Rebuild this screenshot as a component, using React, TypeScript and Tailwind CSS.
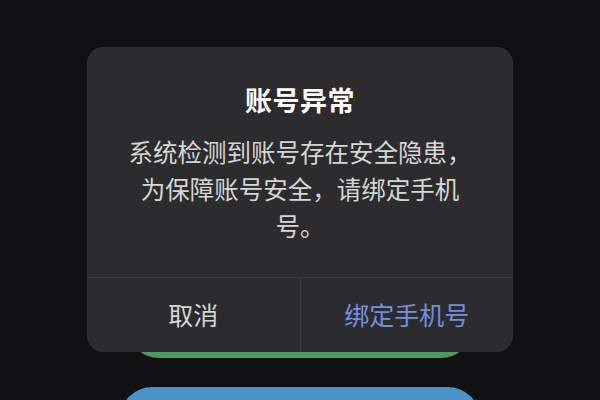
export default function App() {
  return (
    <div
      className="relative w-[600px] h-[400px] overflow-hidden bg-[#111113]"
      style={{ fontFamily: '"Noto Sans CJK SC", "Noto Sans", sans-serif' }}
    >
      {/* page behind the alert */}
      <div className="flex flex-col items-center pt-[296px] gap-[29px]">
        <div className="w-[344px] h-[62px] rounded-[31px] bg-[#4c9a5c]" />
        <div className="w-[360px] h-[64px] rounded-[32px] bg-[#4a93c8]" />
      </div>

      {/* alert */}
      <div className="absolute left-[87px] top-[47px] w-[426px] rounded-[16px] bg-[#2c2c2e] flex flex-col">
        <div className="flex flex-col items-center pt-[37px] pb-[33px]">
          <h2 className="text-[27px] leading-[32px] font-bold text-white tracking-[0.5px]">账号异常</h2>
          <p className="mt-[17px] text-[24.5px] leading-[37px] text-[#d6d6d6] text-center">
            系统检测到账号存在安全隐患，
            <br />
            为保障账号安全，请绑定手机
            <br />
            号。
          </p>
        </div>
        <div className="flex h-[75px] border-t border-[#3a3a3c]">
          <button className="flex-1 flex items-center justify-center text-[25px] text-[#d6d6d6]">
            取消
          </button>
          <div className="w-px bg-[#3a3a3c]" />
          <button className="flex-1 flex items-center justify-center text-[25px] text-[#7590e0]">
            绑定手机号
          </button>
        </div>
      </div>
    </div>
  )
}
